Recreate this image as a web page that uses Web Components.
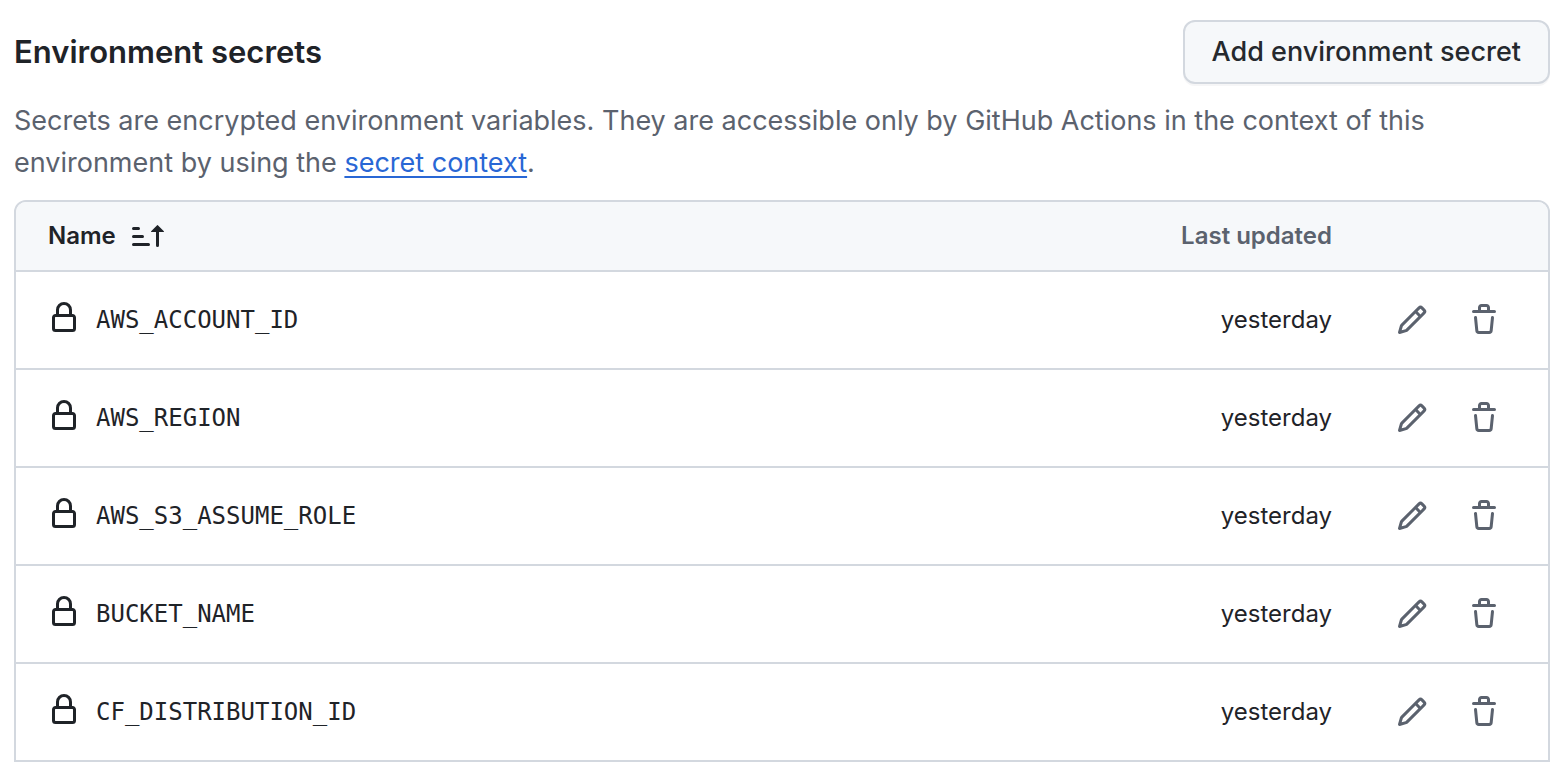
<!DOCTYPE html>
<html lang="en">
<head>
<meta charset="utf-8">
<meta name="viewport" content="width=device-width, initial-scale=1">
<title>Environment secrets</title>
<style>
  body {
    margin: 0;
    background: #fff;
    color: #1f2328;
    font-family: Inter, "Liberation Sans", sans-serif;
    --muted: #5b626e;
    --border: #d3d8df;
    --subtle: #f6f8fa;
    --accent: #2967d5;
  }
</style>
</head>
<body>
<secrets-panel>
  <span slot="title">Environment secrets</span>
  <action-button slot="action">Add environment secret</action-button>
  <span slot="description">Secrets are encrypted environment variables. They are accessible only by GitHub Actions in the context of this environment by using the <text-link href="#secret-context">secret context</text-link>.</span>
  <secrets-table>
    <secret-entry name="AWS_ACCOUNT_ID" updated="yesterday"></secret-entry>
    <secret-entry name="AWS_REGION" updated="yesterday"></secret-entry>
    <secret-entry name="AWS_S3_ASSUME_ROLE" updated="yesterday"></secret-entry>
    <secret-entry name="BUCKET_NAME" updated="yesterday"></secret-entry>
    <secret-entry name="CF_DISTRIBUTION_ID" updated="yesterday"></secret-entry>
  </secrets-table>
</secrets-panel>

<template id="panel-template">
  <style>
    :host { display: block; padding: 20px 12px 0 14px; }
    header { display: flex; align-items: center; justify-content: space-between; gap: 16px; }
    h2 { margin: 0; font-size: 31px; line-height: 48px; font-weight: 600; }
    p { margin: 16px 0; font-size: 27px; line-height: 42px; color: var(--muted); }
  </style>
  <header>
    <h2><slot name="title"></slot></h2>
    <slot name="action"></slot>
  </header>
  <p><slot name="description"></slot></p>
  <slot></slot>
</template>

<template id="button-template">
  <style>
    :host { display: block; flex: none; }
    button {
      display: block;
      box-sizing: border-box;
      height: 64px;
      padding: 0 27px;
      border: 2px solid var(--border);
      border-radius: 12px;
      background: var(--subtle);
      box-shadow: 0 2px 0 rgba(31, 35, 40, 0.04);
      color: #25292e;
      font: 500 27px/40px Inter, "Liberation Sans", sans-serif;
      white-space: nowrap;
      cursor: pointer;
    }
  </style>
  <button type="button"><slot></slot></button>
</template>

<template id="link-template"><style>
    :host { display: inline; }
    a { color: var(--accent); text-decoration: underline; text-decoration-thickness: 2px; text-underline-offset: 4px; }
  </style><a><slot></slot></a></template>

<template id="table-template">
  <style>
    :host {
      display: block;
      border: 2px solid var(--border);
      border-radius: 12px 12px 0 0;
      overflow: hidden;
    }
    table { width: 100%; border-collapse: separate; border-spacing: 0; font-size: 24px; line-height: 36px; }
    th, td { padding: 0; text-align: left; }
    th { height: 68px; background: var(--subtle); font-weight: 600; }
    td { height: 96px; border-top: 2px solid var(--border); }
    .name { padding-left: 32px; }
    .updated { text-align: right; white-space: nowrap; }
    th.updated { color: var(--muted); }
    .actions { width: 216px; }
    .line { display: flex; align-items: center; gap: 16px; }
    .line svg-icon.lock { padding-bottom: 4px; }
    .line code { font-family: "DejaVu Sans Mono", monospace; }
    .sort { display: flex; align-items: center; gap: 16px; padding: 0; border: 0; background: none; color: inherit; font: inherit; cursor: pointer; }
    .tools { display: flex; justify-content: flex-end; gap: 16px; padding-right: 36px; }
    .tool { display: grid; place-items: center; width: 56px; height: 56px; padding: 0; border: 0; border-radius: 12px; background: none; color: var(--muted); cursor: pointer; }
  </style>
  <table>
    <thead>
      <tr>
        <th class="name" scope="col" aria-sort="ascending"><button class="sort" type="button">Name<svg-icon name="sort"></svg-icon></button></th>
        <th class="updated" scope="col">Last updated</th>
        <th class="actions" aria-label="Actions"></th>
      </tr>
    </thead>
    <tbody></tbody>
  </table>
</template>

<template id="row-template">
  <tr>
    <td class="name"><div class="line"><svg-icon class="lock" name="lock"></svg-icon><code></code></div></td>
    <td class="updated"></td>
    <td class="actions">
      <div class="tools">
        <button class="tool edit" type="button"><svg-icon name="pencil"></svg-icon></button>
        <button class="tool remove" type="button"><svg-icon name="trash"></svg-icon></button>
      </div>
    </td>
  </tr>
</template>

<script>
  const ICONS = {
    lock: 'M4 4a4 4 0 0 1 8 0v2h.25c.966 0 1.75.784 1.75 1.75v5.5A1.75 1.75 0 0 1 12.25 15h-8.5A1.75 1.75 0 0 1 2 13.25v-5.5C2 6.784 2.784 6 3.75 6H4Zm8.25 3.5h-8.5a.25.25 0 0 0-.25.25v5.5c0 .138.112.25.25.25h8.5a.25.25 0 0 0 .25-.25v-5.5a.25.25 0 0 0-.25-.25ZM10.5 6V4a2.5 2.5 0 1 0-5 0v2Z',
    sort: 'm12.927 2.573 3 3A.25.25 0 0 1 15.75 6H13.5v6.75a.75.75 0 0 1-1.5 0V6H9.75a.25.25 0 0 1-.177-.427l3-3a.25.25 0 0 1 .354 0ZM0 12.25a.75.75 0 0 1 .75-.75h7.5a.75.75 0 0 1 0 1.5H.75a.75.75 0 0 1-.75-.75Zm0-4a.75.75 0 0 1 .75-.75h4.5a.75.75 0 0 1 0 1.5H.75A.75.75 0 0 1 0 8.25Zm0-4a.75.75 0 0 1 .75-.75h2.5a.75.75 0 0 1 0 1.5H.75A.75.75 0 0 1 0 4.25Z',
    pencil: 'M11.013 1.427a1.75 1.75 0 0 1 2.474 0l1.086 1.086a1.75 1.75 0 0 1 0 2.474l-8.61 8.61c-.21.21-.47.364-.756.445l-3.251.93a.75.75 0 0 1-.927-.928l.929-3.25c.081-.286.235-.547.445-.758l8.61-8.61Zm.176 4.823L9.75 4.81l-6.286 6.287a.253.253 0 0 0-.064.108l-.558 1.953 1.953-.558a.253.253 0 0 0 .108-.064Zm1.238-3.763a.25.25 0 0 0-.354 0L10.811 3.75l1.439 1.44 1.263-1.263a.25.25 0 0 0 0-.354Z',
    trash: 'M11 1.75V3h2.25a.75.75 0 0 1 0 1.5H2.75a.75.75 0 0 1 0-1.5H5V1.75C5 .784 5.784 0 6.75 0h2.5C10.216 0 11 .784 11 1.75ZM4.496 6.675l.66 6.6a.25.25 0 0 0 .249.225h5.19a.25.25 0 0 0 .249-.225l.66-6.6a.75.75 0 0 1 1.492.149l-.66 6.6A1.748 1.748 0 0 1 10.595 15h-5.19a1.75 1.75 0 0 1-1.741-1.575l-.66-6.6a.75.75 0 1 1 1.492-.15ZM6.5 1.75V3h3V1.75a.25.25 0 0 0-.25-.25h-2.5a.25.25 0 0 0-.25.25Z'
  };

  class TemplateElement extends HTMLElement {
    constructor() {
      super();
      const source = document.getElementById(this.constructor.template);
      this.attachShadow({ mode: 'open' }).append(source.content.cloneNode(true));
    }
  }

  customElements.define('svg-icon', class extends HTMLElement {
    connectedCallback() {
      if (this.shadowRoot) return;
      this.attachShadow({ mode: 'open' }).innerHTML = `
        <style>
          :host { display: block; flex: none; }
          svg { display: block; width: 32px; height: 32px; fill: currentColor; }
        </style>
        <svg viewBox="0 0 16 16" aria-hidden="true"><path d="${ICONS[this.getAttribute('name')]}"/></svg>`;
    }
  });

  customElements.define('action-button', class extends TemplateElement {
    static template = 'button-template';
  });

  customElements.define('text-link', class extends TemplateElement {
    static template = 'link-template';
    connectedCallback() {
      this.shadowRoot.querySelector('a').href = this.getAttribute('href');
    }
  });

  customElements.define('secret-entry', class extends HTMLElement {
    get name() { return this.getAttribute('name'); }
    get updated() { return this.getAttribute('updated'); }
  });

  customElements.define('secrets-table', class extends TemplateElement {
    static template = 'table-template';
    connectedCallback() {
      const rowTemplate = document.getElementById('row-template');
      const rows = [...this.querySelectorAll('secret-entry')].map(entry => {
        const row = rowTemplate.content.cloneNode(true);
        row.querySelector('code').textContent = entry.name;
        row.querySelector('.updated').textContent = entry.updated;
        row.querySelector('.edit').setAttribute('aria-label', `Edit ${entry.name}`);
        row.querySelector('.remove').setAttribute('aria-label', `Delete ${entry.name}`);
        return row;
      });
      this.shadowRoot.querySelector('tbody').replaceChildren(...rows);
    }
  });

  customElements.define('secrets-panel', class extends TemplateElement {
    static template = 'panel-template';
  });
</script>
</body>
</html>
